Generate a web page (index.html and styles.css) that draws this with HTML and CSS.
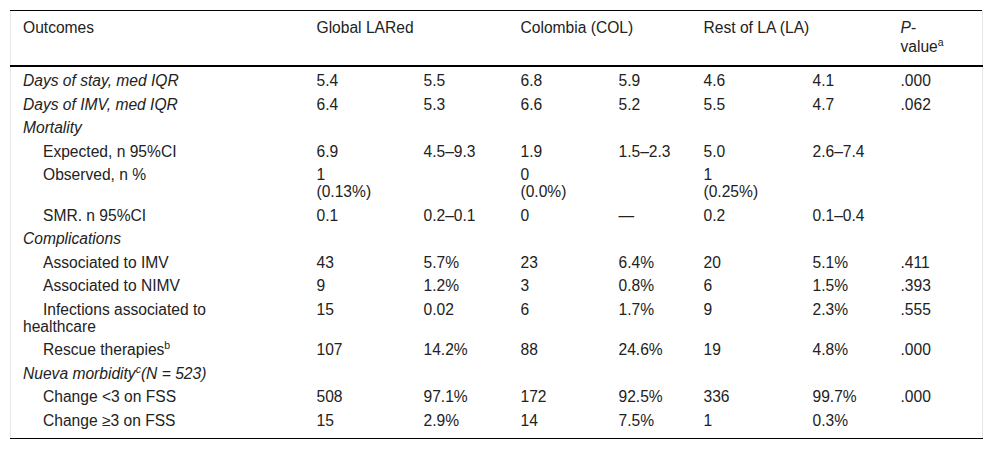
FILE: index.html
```html
<!DOCTYPE html>
<html lang="en">
<head>
<meta charset="utf-8">
<title>Outcomes</title>
<link rel="stylesheet" href="styles.css">
</head>
<body>
<div class="wrap">
<table class="tbl">
<colgroup>
<col class="c1"><col class="c2"><col class="c3"><col class="c4"><col class="c5"><col class="c6"><col class="c7"><col class="c8">
</colgroup>
<thead>
<tr>
<th>Outcomes</th>
<th colspan="2">Global LARed</th>
<th colspan="2">Colombia (COL)</th>
<th colspan="2">Rest of LA (LA)</th>
<th><i>P</i>-value<sup>a</sup></th>
</tr>
</thead>
<tbody>
<tr><td><i>Days of stay, med IQR</i></td><td>5.4</td><td>5.5</td><td>6.8</td><td>5.9</td><td>4.6</td><td>4.1</td><td>.000</td></tr>
<tr><td><i>Days of IMV, med IQR</i></td><td>6.4</td><td>5.3</td><td>6.6</td><td>5.2</td><td>5.5</td><td>4.7</td><td>.062</td></tr>
<tr><td><i>Mortality</i></td><td></td><td></td><td></td><td></td><td></td><td></td><td></td></tr>
<tr><td class="sub">Expected, n 95%CI</td><td>6.9</td><td>4.5–9.3</td><td>1.9</td><td>1.5–2.3</td><td>5.0</td><td>2.6–7.4</td><td></td></tr>
<tr><td class="sub">Observed, n %</td><td>1<br>(0.13%)</td><td></td><td>0<br>(0.0%)</td><td></td><td>1<br>(0.25%)</td><td></td><td></td></tr>
<tr><td class="sub">SMR. n 95%CI</td><td>0.1</td><td>0.2–0.1</td><td>0</td><td>—</td><td>0.2</td><td>0.1–0.4</td><td></td></tr>
<tr><td><i>Complications</i></td><td></td><td></td><td></td><td></td><td></td><td></td><td></td></tr>
<tr><td class="sub">Associated to IMV</td><td>43</td><td>5.7%</td><td>23</td><td>6.4%</td><td>20</td><td>5.1%</td><td>.411</td></tr>
<tr><td class="sub">Associated to NIMV</td><td>9</td><td>1.2%</td><td>3</td><td>0.8%</td><td>6</td><td>1.5%</td><td>.393</td></tr>
<tr><td class="sub">Infections associated to healthcare</td><td>15</td><td>0.02</td><td>6</td><td>1.7%</td><td>9</td><td>2.3%</td><td>.555</td></tr>
<tr><td class="sub">Rescue therapies<sup>b</sup></td><td>107</td><td>14.2%</td><td>88</td><td>24.6%</td><td>19</td><td>4.8%</td><td>.000</td></tr>
<tr><td><i>Nueva morbidity<sup>c</sup>(N = 523)</i></td><td></td><td></td><td></td><td></td><td></td><td></td><td></td></tr>
<tr><td class="sub">Change &lt;3 on FSS</td><td>508</td><td>97.1%</td><td>172</td><td>92.5%</td><td>336</td><td>99.7%</td><td>.000</td></tr>
<tr class="last"><td class="sub">Change ≥3 on FSS</td><td>15</td><td>2.9%</td><td>14</td><td>7.5%</td><td>1</td><td>0.3%</td><td></td></tr>
</tbody>
</table>
</div>
</body>
</html>
```
FILE: styles.css
```css
html, body {
  margin: 0;
  padding: 0;
  background: #fff;
}
.wrap {
  padding: 10px 10px;
}
.tbl {
  width: 972px;
  table-layout: fixed;
  border-collapse: collapse;
  font-family: "Liberation Sans", Arial, sans-serif;
  font-size: 15.6px;
  line-height: 17px;
  color: #222;
  border-top: 1px solid #000;
  border-bottom: 1px solid #000;
  border-left: 1px solid #e6e6e6;
  border-right: 1px solid #e6e6e6;
}
.c1 { width: 294px; }
.c2 { width: 107px; }
.c3 { width: 97px; }
.c4 { width: 98px; }
.c5 { width: 85px; }
.c6 { width: 109px; }
.c7 { width: 88px; }
.c8 { width: 94px; }
.tbl th {
  font-weight: normal;
  text-align: left;
  vertical-align: top;
  padding: 7px 12px 9px 12px;
  line-height: 19px;
  border-bottom: 2px solid #000;
}
.tbl th:last-child {
  padding-right: 24px;
}
.tbl td {
  text-align: left;
  vertical-align: top;
  padding: 5px 12px 1.5px 12px;
}
.tbl td:first-child {
  padding-right: 36px;
}
.tbl td.sub {
  text-indent: 20px;
}
.tbl .last td {
  padding-bottom: 9px;
}
.tbl sup {
  font-size: 10.5px;
  line-height: 0;
  vertical-align: 6px;
}
```
